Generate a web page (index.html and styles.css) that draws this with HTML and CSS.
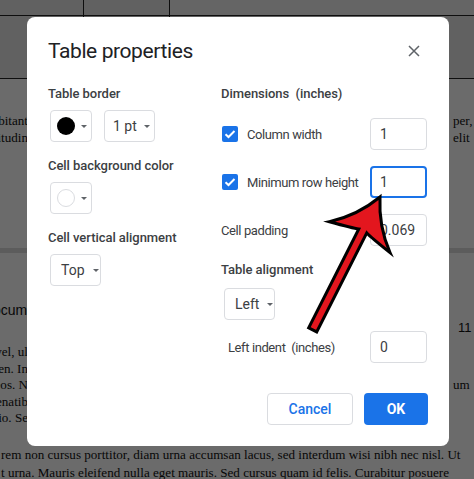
FILE: index.html
```html
<!DOCTYPE html>
<html>
<head>
<meta charset="utf-8">
<link rel="stylesheet" href="styles.css">
</head>
<body>
<div class="doc">
  <div class="tbl">
    <div class="c c1"></div><div class="c c2"></div><div class="c c3"></div>
    <div class="c c4"></div><div class="c c5"></div><div class="c c6"></div>
  </div>
  <div class="para p1">
    <div class="ln"><span class="l">Pellentesque habitant</span><span class="r">per,</span></div>
    <div class="ln"><span class="l">Donec sollicitudin</span><span class="r">elit</span></div>
  </div>
  <div class="pbreak"></div>
  <div class="head"><span class="l hl">Docume</span></div>
  <div class="pnum"><span class="r num">11</span></div>
  <div class="para p2">
    <div class="ln"><span class="l">vel, ul</span><span class="r"></span></div>
    <div class="ln"><span class="l">Sapien. In</span><span class="r"></span></div>
    <div class="ln"><span class="l">ineos. N</span><span class="r">um</span></div>
    <div class="ln"><span class="l">venatib</span><span class="r"></span></div>
    <div class="ln"><span class="l">Proin odio. Se</span><span class="r"></span></div>
  </div>
  <div class="para p3">
    <div class="full">rem non cursus porttitor, diam urna accumsan lacus, sed interdum wisi nibh nec nisl. Ut</div>
    <div class="full">t urna. Mauris eleifend nulla eget mauris. Sed cursus quam id felis. Curabitur posuere</div>
  </div>
</div>

<div class="scrim"></div>

<div class="dialog">
  <div class="title-row">
    <div class="title">Table properties</div>
    <svg class="close" width="12" height="12" viewBox="0 0 12 12"><path d="M1 1L11 11M11 1L1 11" stroke="#5f6368" stroke-width="1.5"/></svg>
  </div>
  <div class="cols">
    <div class="col-left">
      <div class="label">Table border</div>
      <div class="btn-row">
        <div class="btn swatch-btn"><span class="dot black"></span><span class="caret"></span></div>
        <div class="btn pt-btn"><span>1 pt</span><span class="caret"></span></div>
      </div>
      <div class="label mt16">Cell background color</div>
      <div class="btn-row">
        <div class="btn swatch-btn"><span class="dot white"></span><span class="caret"></span></div>
      </div>
      <div class="label mt16">Cell vertical alignment</div>
      <div class="btn-row">
        <div class="btn sel-btn"><span>Top</span><span class="caret"></span></div>
      </div>
    </div>
    <div class="col-right">
      <div class="label">Dimensions&nbsp; (inches)</div>
      <div class="row first">
        <div class="chk-label"><span class="chk"><svg width="16" height="16" viewBox="0 0 16 16"><path d="M3.5 8.2L6.5 11L12.5 5" fill="none" stroke="#fff" stroke-width="2"/></svg></span>Column width</div>
        <div class="input">1</div>
      </div>
      <div class="row">
        <div class="chk-label"><span class="chk"><svg width="16" height="16" viewBox="0 0 16 16"><path d="M3.5 8.2L6.5 11L12.5 5" fill="none" stroke="#fff" stroke-width="2"/></svg></span>Minimum row height</div>
        <div class="input focus">1</div>
      </div>
      <div class="row">
        <div class="plain">Cell padding</div>
        <div class="input">0.069</div>
      </div>
      <div class="label mt16">Table alignment</div>
      <div class="btn-row align-row">
        <div class="btn sel-btn"><span>Left</span><span class="caret"></span></div>
      </div>
      <div class="row indent-row">
        <div class="plain indent">Left indent&nbsp; (inches)</div>
        <div class="input">0</div>
      </div>
    </div>
  </div>
  <div class="footer">
    <div class="fbtn cancel">Cancel</div>
    <div class="fbtn ok">OK</div>
  </div>
</div>

<svg class="arrow" width="474" height="479" viewBox="0 0 474 479">
  <path d="M380,197 Q357.1,215.7 329.4,221.7 Q353,228.2 358.8,228.9 L308.7,327.9 L316.7,331.9 L366.8,232.9 Q370.8,237.2 390,252.5 Q378.5,226.5 380,197 Z" fill="#e3161e" stroke="#000" stroke-width="3" stroke-linejoin="miter" stroke-miterlimit="12"/>
</svg>
</body>
</html>
```

FILE: styles.css
```css
html, body {
  margin: 0;
  padding: 0;
}
body {
  width: 474px;
  height: 479px;
  overflow: hidden;
  background: #fff;
  position: relative;
}
.doc {
  width: 474px;
  font-family: "Liberation Serif", "Times New Roman", serif;
  font-size: 13.1px;
  color: #111;
}
.tbl {
  display: grid;
  grid-template-columns: 84px 86px 1fr;
  grid-template-rows: 16px 63px;
  background: #e8e8e8;
}
.c {
  border-right: 1px solid #222;
  border-bottom: 1px solid #222;
}
.c3 { border-right: none; background: #f1f1f1; }
.c6 { border-right: none; background: #e8e8e8; }
.para .ln {
  display: flex;
  justify-content: space-between;
  white-space: nowrap;
  height: 17px;
  line-height: 17px;
}
.l {
  display: flex;
  justify-content: flex-end;
  width: 28px;
  overflow: hidden;
  white-space: nowrap;
}
.r {
  width: 21px;
  overflow: hidden;
  white-space: nowrap;
}
.p1 { padding-top: 33px; }
.pbreak {
  margin-top: 102px;
  height: 5px;
  background: #dcdcdc;
}
.head {
  margin-top: 47px;
  height: 20px;
  font-family: "Liberation Sans", Arial, sans-serif;
  font-size: 14px;
  line-height: 20px;
}
.hl { width: 35px; }
.pnum {
  display: flex;
  justify-content: flex-end;
  height: 16px;
  font-family: "Liberation Sans", Arial, sans-serif;
  font-size: 13px;
  line-height: 16px;
}
.num { width: 16px; }
.p2 { margin-top: 8px; }
.p2 .ln { height: 16.6px; line-height: 16.6px; }
.p3 { margin-top: 19.5px; }
.full {
  white-space: nowrap;
  height: 17.5px;
  line-height: 17.5px;
  padding-left: 1px;
}
.scrim {
  position: absolute;
  inset: 0;
  background: rgba(0, 0, 0, 0.58);
}
.arrow {
  position: absolute;
  left: 0;
  top: 0;
}
.dialog {
  position: absolute;
  left: 27px;
  top: 17px;
  width: 422px;
  box-sizing: border-box;
  background: #fff;
  border-radius: 8px;
  padding: 20px 22px 21px 21px;
  font-family: Roboto, "Noto Sans", sans-serif;
  color: #3c4043;
}
.title-row {
  display: flex;
  justify-content: space-between;
  align-items: center;
  height: 28px;
}
.title {
  font-family: Roboto, "Noto Sans", sans-serif;
  font-size: 21px;
  line-height: 28px;
  color: #202124;
  letter-spacing: -0.4px;
}
.close { margin-right: 7px; }
.cols {
  display: grid;
  grid-template-columns: 173px 1fr;
  margin-top: 21px;
}
.label {
  font-size: 13px;
  font-weight: 500;
  line-height: 16px;
  height: 16px;
  color: #3c4043;
  letter-spacing: -0.05px;
  white-space: nowrap;
}
.mt16 { margin-top: 16px; }
.btn-row {
  display: flex;
  gap: 12px;
  margin-top: 8px;
}
.btn {
  box-sizing: border-box;
  height: 32px;
  border: 1px solid #dadce0;
  border-radius: 4px;
  display: flex;
  align-items: center;
  font-size: 14px;
  color: #3c4043;
}
.swatch-btn {
  width: 42px;
  margin-left: 2px;
  padding-left: 6px;
  gap: 6px;
}
.dot {
  width: 18px;
  height: 18px;
  border-radius: 50%;
  box-sizing: border-box;
}
.dot.black { background: #000; }
.dot.white { background: #fff; border: 1px solid #dadce0; }
.caret {
  width: 0;
  height: 0;
  border-left: 3.5px solid transparent;
  border-right: 3.5px solid transparent;
  border-top: 3.5px solid #5f6368;
}
.pt-btn {
  width: 51px;
  padding-left: 8px;
  gap: 7px;
}
.sel-btn {
  width: 51px;
  margin-left: 2px;
  padding-left: 10px;
  gap: 8px;
}
.row {
  display: flex;
  justify-content: space-between;
  align-items: center;
  height: 32px;
  margin-top: 16px;
}
.chk-label {
  display: flex;
  align-items: center;
  gap: 9px;
  font-size: 13px;
  letter-spacing: -0.4px;
  margin-left: 1px;
  white-space: nowrap;
}
.chk {
  width: 16px;
  height: 16px;
  border-radius: 2px;
  background: #1a73e8;
  display: flex;
}
.plain {
  font-size: 13px;
  letter-spacing: -0.4px;
  white-space: nowrap;
}
.input {
  box-sizing: border-box;
  width: 57px;
  height: 32px;
  border: 1px solid #dadce0;
  border-radius: 4px;
  padding-left: 9px;
  font-size: 14px;
  line-height: 30px;
  color: #3c4043;
}
.input.focus {
  border: 2px solid #1a73e8;
  padding-left: 8px;
  line-height: 28px;
}
.align-row { margin-top: 10px; margin-left: 1px; }
.indent-row { margin-top: 11px; }
.indent { margin-left: 7px; }
.footer {
  display: flex;
  justify-content: flex-end;
  gap: 11px;
  margin-top: 30px;
  margin-right: -1px;
}
.fbtn {
  box-sizing: border-box;
  height: 32px;
  border-radius: 4px;
  display: flex;
  align-items: center;
  justify-content: center;
  font-size: 14px;
  font-weight: 500;
}
.cancel {
  width: 86px;
  border: 1px solid #dadce0;
  color: #1a73e8;
}
.ok {
  width: 64px;
  background: #1a73e8;
  color: #fff;
  font-weight: 700;
}
```
